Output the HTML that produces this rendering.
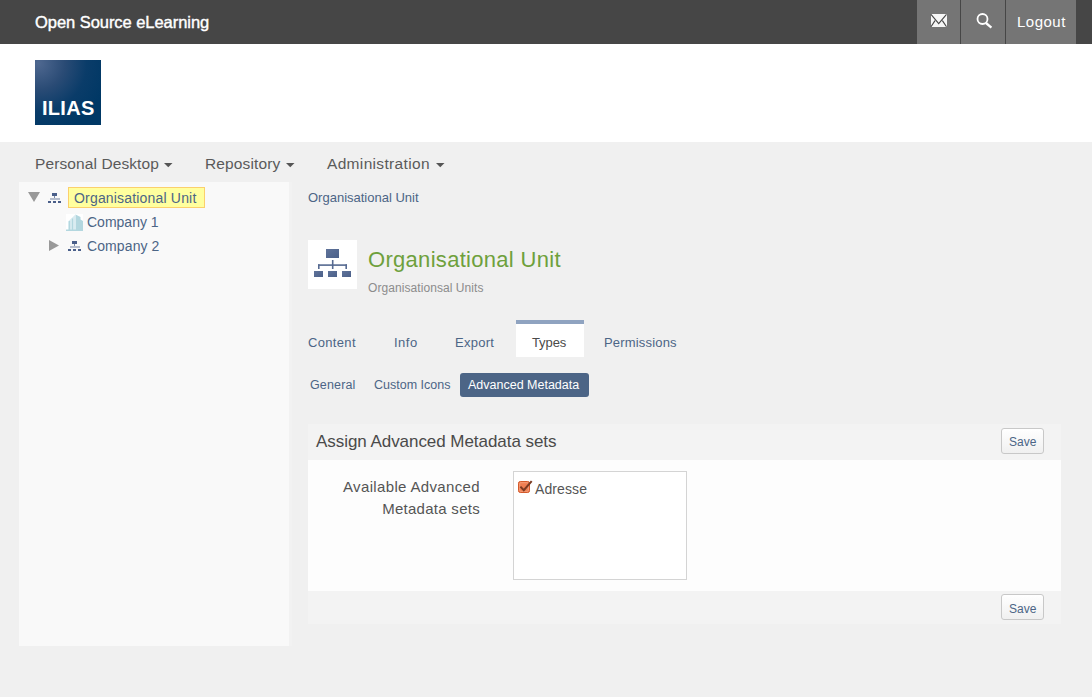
<!DOCTYPE html>
<html><head><meta charset="utf-8">
<style>
*{margin:0;padding:0;box-sizing:border-box}
html,body{width:1092px;height:697px;overflow:hidden;background:#f0f0f0;font-family:"Liberation Sans",sans-serif;position:relative}
.a{position:absolute;white-space:nowrap;line-height:1}
#top{position:absolute;left:0;top:0;width:1092px;height:44px;background:#464646}
#hdr{position:absolute;left:0;top:44px;width:1092px;height:98px;background:#fff}
.tb{position:absolute;top:0;height:44px;background:#757575}
#logo{position:absolute;left:35px;top:60px;width:66px;height:65px;background:radial-gradient(circle at 5% 5%,#4f6890 0%,#2a4b75 30%,#0a3c69 55%,#003865 80%)}
.lnk{color:#4c6586}
#left{position:absolute;left:19px;top:182px;width:270px;height:464px;background:#f9f9f9}
#strip{position:absolute;left:289px;top:182px;width:3px;height:464px;background:#f2f2f2}
.hl{position:absolute;left:68px;top:187px;width:137px;height:21px;background:#ffff9e;border:1px solid #fbd06c}
#icobox{position:absolute;left:308px;top:240px;width:49px;height:49px;background:#fff}
.ib{position:absolute;background:#536a92}
#acttab{position:absolute;left:516px;top:320px;width:68px;height:37px;background:#fff;border-top:4px solid #8fa3c0}
#pill{position:absolute;left:460px;top:373px;width:129px;height:24px;background:#4c6586;border-radius:3px}
#fh{position:absolute;left:308px;top:424px;width:753px;height:36px;background:#f3f3f3}
#fb{position:absolute;left:308px;top:460px;width:753px;height:131px;background:#fdfdfd}
#ff{position:absolute;left:308px;top:591px;width:753px;height:33px;background:#f3f3f3}
#box{position:absolute;left:513px;top:471px;width:174px;height:109px;background:#fff;border:1px solid #d4d4d4}
.btn{position:absolute;left:1001px;width:43px;height:26px;border:1px solid #c8c8c8;border-radius:3px;background:linear-gradient(#fff,#f0f0f0)}
</style></head>
<body>
<div id="top"></div>
<div class="a" style="left:35px;top:14px;font-size:16.5px;color:#fff;-webkit-text-stroke:0.4px #fff;letter-spacing:-0.05px">Open Source eLearning</div>
<div class="tb" style="left:917px;width:43px"></div>
<div class="tb" style="left:961px;width:44px"></div>
<div class="tb" style="left:1006px;width:70px"></div>
<!-- mail icon -->
<svg class="a" style="left:926px;top:10px" width="26" height="22" viewBox="0 0 26 22">
<rect x="5" y="4" width="16" height="13" fill="#f6f6f6"/>
<path d="M5 4.3 L12.7 13.6 L20.5 4.3 M5 16.8 L9 10.6 M20.5 16.8 L16.4 10.6" stroke="#474747" stroke-width="1.15" fill="none"/>
</svg>
<!-- search icon -->
<svg class="a" style="left:970px;top:10px" width="26" height="22" viewBox="0 0 26 22">
<circle cx="12.5" cy="9" r="5" stroke="#fff" stroke-width="1.8" fill="none"/>
<path d="M16 13 L21.4 17.6" stroke="#fff" stroke-width="2.3" stroke-linecap="butt"/>
</svg>
<div class="a" style="left:1017px;top:14px;font-size:15px;color:#fff;letter-spacing:0.5px">Logout</div>

<div id="hdr"></div>
<div id="logo"></div>
<div class="a" style="left:42px;top:98px;font-size:20px;font-weight:bold;color:#fff;letter-spacing:0.3px">ILIAS</div>

<!-- main menu -->
<div class="a" style="left:35px;top:156px;font-size:15.5px;color:#5a5a5a;letter-spacing:0.1px">Personal Desktop</div>
<svg class="a" style="left:163.5px;top:163px" width="9" height="5"><path d="M0 0H8.5L4.25 4.2Z" fill="#555"/></svg>
<div class="a" style="left:205px;top:156px;font-size:15.5px;color:#5a5a5a;letter-spacing:0.13px">Repository</div>
<svg class="a" style="left:285.5px;top:163px" width="9" height="5"><path d="M0 0H8.5L4.25 4.2Z" fill="#555"/></svg>
<div class="a" style="left:327px;top:156px;font-size:15.5px;color:#5a5a5a;letter-spacing:0.33px">Administration</div>
<svg class="a" style="left:435.5px;top:163px" width="9" height="5"><path d="M0 0H8.5L4.25 4.2Z" fill="#555"/></svg>

<!-- left tree -->
<div id="left"></div>
<div id="strip"></div>
<svg class="a" style="left:28px;top:192px" width="12" height="10"><path d="M0 0H12L6 10Z" fill="#999"/></svg>
<svg class="a" style="left:47px;top:192px" width="15" height="12" viewBox="0 0 15 12" shape-rendering="crispEdges">
<rect x="5" y="1" width="5" height="3" fill="#4a5f8a"/>
<rect x="7" y="4" width="1" height="3" fill="#7a8aa8"/>
<rect x="3" y="6" width="10" height="2" fill="#b4bccc"/>
<rect x="1" y="9" width="3" height="2" fill="#4a5f8a"/>
<rect x="6" y="9" width="3" height="2" fill="#4a5f8a"/>
<rect x="11" y="9" width="3" height="2" fill="#4a5f8a"/>
</svg>
<div class="hl"></div>
<div class="a lnk" style="left:74px;top:191px;font-size:14px;letter-spacing:0.18px">Organisational Unit</div>
<svg class="a" style="left:66px;top:214px" width="17" height="17" viewBox="0 0 17 17">
<rect x="0" y="0" width="17" height="17" fill="#fff"/>
<path d="M9.5 0.5 L14.5 3 L14.5 5.5 L17 7 L17 17 L9.5 17 Z" fill="#b3d7df"/>
<path d="M2 7.5 L9.5 0.5 L9.5 17 L2 17 Z" fill="#d9ecf1"/>
<path d="M3.5 7 V17 M6.5 4.5 V17" stroke="#b3d7df" stroke-width="1.2"/>
<rect x="0" y="15.5" width="17" height="1.5" fill="#b3d7df"/>
</svg>
<div class="a lnk" style="left:87px;top:215px;font-size:14px">Company 1</div>
<svg class="a" style="left:49px;top:240px" width="10" height="11"><path d="M0 0V11L10 5.5Z" fill="#999"/></svg>
<svg class="a" style="left:67px;top:240px" width="15" height="12" viewBox="0 0 15 12" shape-rendering="crispEdges">
<rect x="5" y="1" width="5" height="3" fill="#4a5f8a"/>
<rect x="7" y="4" width="1" height="3" fill="#7a8aa8"/>
<rect x="3" y="6" width="10" height="2" fill="#b4bccc"/>
<rect x="1" y="9" width="3" height="2" fill="#4a5f8a"/>
<rect x="6" y="9" width="3" height="2" fill="#4a5f8a"/>
<rect x="11" y="9" width="3" height="2" fill="#4a5f8a"/>
</svg>
<div class="a lnk" style="left:87px;top:239px;font-size:14px;letter-spacing:0.1px">Company 2</div>

<!-- content -->
<div class="a lnk" style="left:308px;top:191px;font-size:13px">Organisational Unit</div>
<div id="icobox"></div>
<svg class="a" style="left:308px;top:240px" width="49" height="49" viewBox="0 0 49 49">
<defs><linearGradient id="g1" x1="0" y1="0" x2="1" y2="1"><stop offset="0" stop-color="#5f739a"/><stop offset="1" stop-color="#4b6089"/></linearGradient></defs>
<rect x="18" y="9" width="13" height="9" fill="url(#g1)"/>
<rect x="23.9" y="20" width="1.6" height="9" fill="#566a91"/>
<rect x="10" y="24.3" width="29" height="1.6" fill="#566a91"/>
<rect x="10" y="24.3" width="1.6" height="4.7" fill="#566a91"/>
<rect x="37.4" y="24.3" width="1.6" height="4.7" fill="#566a91"/>
<rect x="6" y="31" width="9" height="6" fill="url(#g1)"/>
<rect x="20" y="31" width="9" height="6" fill="url(#g1)"/>
<rect x="34" y="31" width="9" height="6" fill="url(#g1)"/>
</svg>
<div class="a" style="left:368px;top:249px;font-size:22px;color:#6ea03c;letter-spacing:0.3px">Organisational Unit</div>
<div class="a" style="left:368px;top:282px;font-size:12px;color:#8c8c8c;letter-spacing:0.07px">Organisationsal Units</div>

<!-- tabs -->
<div id="acttab"></div>
<div class="a lnk" style="left:308px;top:336px;font-size:13px;letter-spacing:0.33px">Content</div>
<div class="a lnk" style="left:394px;top:336px;font-size:13px;letter-spacing:0.5px">Info</div>
<div class="a lnk" style="left:455px;top:336px;font-size:13px;letter-spacing:0.25px">Export</div>
<div class="a" style="left:532px;top:336px;font-size:13px;color:#4a4a4a;letter-spacing:-0.1px">Types</div>
<div class="a lnk" style="left:604px;top:336px;font-size:13px;letter-spacing:0.18px">Permissions</div>

<div class="a lnk" style="left:310px;top:379px;font-size:12.5px;letter-spacing:0.15px">General</div>
<div class="a lnk" style="left:374px;top:379px;font-size:12.5px">Custom Icons</div>
<div id="pill"></div>
<div class="a" style="left:468px;top:379px;font-size:12.5px;color:#fff">Advanced Metadata</div>

<!-- form -->
<div id="fh"></div>
<div id="fb"></div>
<div id="ff"></div>
<div class="a" style="left:316px;top:433px;font-size:17px;color:#4a4a4a;letter-spacing:-0.05px">Assign Advanced Metadata sets</div>
<div class="btn" style="top:428px"></div>
<div class="a lnk" style="left:1009px;top:436px;font-size:12px">Save</div>
<div class="a" style="left:343px;top:479px;font-size:15px;color:#555;text-align:right;width:137px;letter-spacing:0.35px">Available Advanced</div>
<div class="a" style="left:343px;top:501px;font-size:15px;color:#555;text-align:right;width:137px;letter-spacing:0.28px">Metadata sets</div>
<div id="box"></div>
<svg class="a" style="left:512px;top:474px" width="28" height="24" viewBox="0 0 28 24">
<rect x="6.5" y="7.5" width="11" height="11" rx="1.8" fill="#ef7e52" stroke="#d4592a" stroke-width="1"/>
<rect x="7.7" y="8.7" width="8.6" height="8.6" rx="1" fill="none" stroke="#f6a582" stroke-width="0.8"/>
<path d="M8.4 12.6 L11.8 16.2 L19.7 7.2" stroke="#7a3a22" stroke-width="2" fill="none" stroke-linejoin="miter"/>
</svg>
<div class="a" style="left:535px;top:482px;font-size:14px;color:#555;letter-spacing:0.1px">Adresse</div>
<div class="btn" style="top:594px"></div>
<div class="a lnk" style="left:1009px;top:603px;font-size:12px">Save</div>
</body></html>
